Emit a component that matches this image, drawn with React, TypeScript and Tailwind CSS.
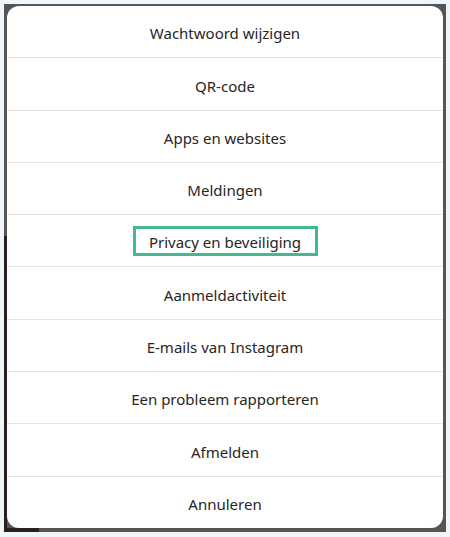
const items = [
  'Wachtwoord wijzigen',
  'QR-code',
  'Apps en websites',
  'Meldingen',
  'Privacy en beveiliging',
  'Aanmeldactiviteit',
  'E-mails van Instagram',
  'Een probleem rapporteren',
  'Afmelden',
  'Annuleren',
];

export default function App() {
  return (
    <div className="w-[450px] h-[537px] bg-[#eef5fb] p-[4px]">
      <div className="w-[442px] h-[528px] bg-[#555555] pl-[3px] pr-[3px] pt-[2px] pb-[4px] relative overflow-hidden">
        <div className="absolute left-0 top-[232px] w-[3px] h-[296px] bg-[#2a1f1f]" />
        <div className="absolute left-0 bottom-0 w-[35px] h-[4px] bg-[#2a1f1f]" />
        <div
          className="relative h-full bg-white rounded-[12px] overflow-hidden flex flex-col"
          style={{ fontFamily: '"Noto Sans", "Open Sans", sans-serif' }}
        >
          {items.map((label, i) => (
            <div
              key={label}
              className={`flex-1 flex items-center justify-center pt-[4px] text-[15px] text-[#262626] ${
                i > 0 ? 'border-t border-[#e4e4e4]' : ''
              }`}
            >
              {i === 4 ? (
                <span className="border-[3px] border-[#46b891] h-[30px] w-[185px] -mt-[3px] flex items-center justify-center pt-[1px]">
                  {label}
                </span>
              ) : (
                label
              )}
            </div>
          ))}
        </div>
      </div>
    </div>
  );
}
